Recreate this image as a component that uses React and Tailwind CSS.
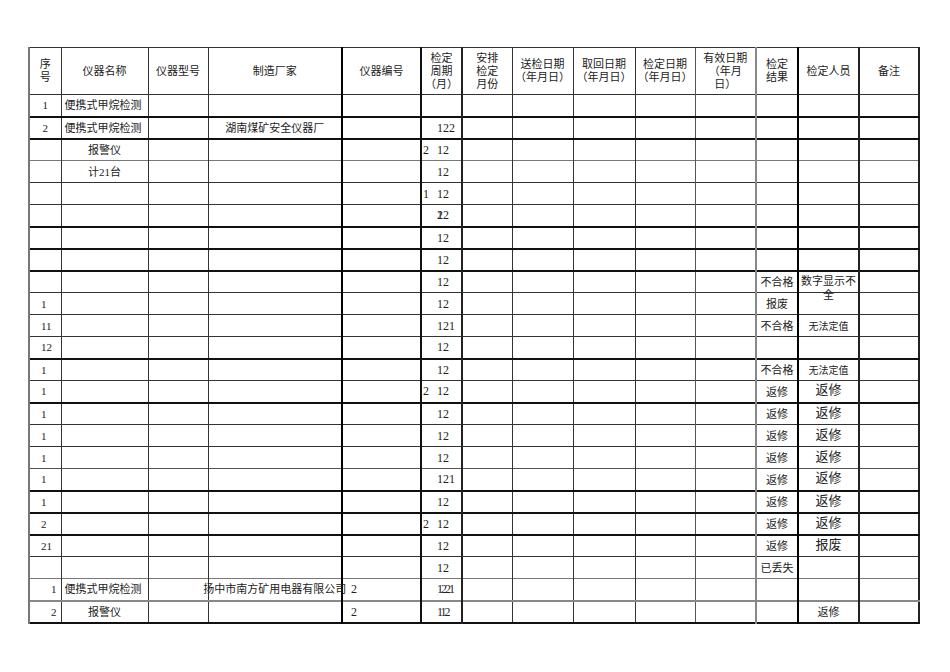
const cols = [32, 87, 60, 134, 79, 41, 50, 61, 62, 60, 61, 42, 61, 60]

const vLines = [
  'border-l-2 border-l-[#777]',
  'border-l border-l-[#333]',
  'border-l border-l-[#333]',
  'border-l border-l-[#333]',
  'border-l-2 border-l-[#000]',
  'border-l-2 border-l-[#111]',
  'border-l-2 border-l-[#222]',
  'border-l border-l-[#333]',
  'border-l border-l-[#333]',
  'border-l border-l-[#333]',
  'border-l border-l-[#555]',
  'border-l-2 border-l-[#888]',
  'border-l-2 border-l-[#000]',
  'border-l-2 border-l-[#222]',
]

// top border of each body row
const hLines = [
  'border-t border-t-[#333]',
  'border-t-2 border-t-[#111]',
  'border-t-2 border-t-[#111]',
  'border-t border-t-[#777]',
  'border-t border-t-[#333]',
  'border-t border-t-[#333]',
  'border-t-2 border-t-[#111]',
  'border-t-2 border-t-[#111]',
  'border-t-2 border-t-[#111]',
  'border-t border-t-[#333]',
  'border-t border-t-[#333]',
  'border-t border-t-[#333]',
  'border-t-2 border-t-[#111]',
  'border-t border-t-[#333]',
  'border-t-2 border-t-[#111]',
  'border-t border-t-[#333]',
  'border-t border-t-[#333]',
  'border-t border-t-[#555]',
  'border-t-2 border-t-[#111]',
  'border-t-2 border-t-[#111]',
  'border-t-2 border-t-[#111]',
  'border-t border-t-[#333]',
  'border-t border-t-[#777]',
  'border-t-2 border-t-[#888]',
]

const headers = [
  ['序', '号'],
  ['仪器名称'],
  ['仪器型号'],
  ['制造厂家'],
  ['仪器编号'],
  ['检定', '周期', '（月）'],
  ['安排', '检定', '月份'],
  ['送检日期', '（年月日）'],
  ['取回日期', '（年月日）'],
  ['检定日期', '（年月日）'],
  ['有效日期', '（年月', '日）'],
  ['检定', '结果'],
  ['检定人员'],
  ['备注'],
]

const fix = { result: '返修', person: '返修' }

const rows = [
  { no: '1', name: '便携式甲烷检测', nameLeft: true },
  { no: '2', name: '便携式甲烷检测', nameLeft: true, maker: '湖南煤矿安全仪器厂', cycle: '122' },
  { name: '报警仪', cycle: '12', pre: '2' },
  { name: '计21台', cycle: '12' },
  { cycle: '12', pre: '1' },
  { cycle: '12', ghost: '2' },
  { cycle: '12' },
  { cycle: '12' },
  { cycle: '12', result: '不合格', person: '数字显示不全', wrap: true },
  { no: '1', noLeft: true, cycle: '12', result: '报废' },
  { no: '11', noLeft: true, cycle: '121', result: '不合格', person: '无法定值', small: true },
  { no: '12', noLeft: true, cycle: '12' },
  { no: '1', noLeft: true, cycle: '12', result: '不合格', person: '无法定值', small: true },
  { no: '1', noLeft: true, cycle: '12', pre: '2', ...fix },
  { no: '1', noLeft: true, cycle: '12', ...fix },
  { no: '1', noLeft: true, cycle: '12', ...fix },
  { no: '1', noLeft: true, cycle: '12', ...fix },
  { no: '1', noLeft: true, cycle: '121', ...fix },
  { no: '1', noLeft: true, cycle: '12', ...fix },
  { no: '2', noLeft: true, cycle: '12', pre: '2', ...fix },
  { no: '21', noLeft: true, cycle: '12', result: '返修', person: '报废' },
  { cycle: '12', result: '已丢失' },
  { no: '1', noRight: true, name: '便携式甲烷检测', nameLeft: true, maker: '扬中市南方矿用电器有限公司', code: '2', cycle: '1221', tight: true },
  { no: '2', noRight: true, name: '报警仪', code: '2', cycle: '112', tight: true, person: '返修', personSmall: true },
]

function Cycle({ r }) {
  if (!r.cycle) return null
  return (
    <div className="relative flex items-center pl-[15px]">
      {r.pre && <span className="absolute left-[1px]">{r.pre}</span>}
      {r.ghost && <span className="absolute left-[15px]">{r.ghost}</span>}
      <span className={r.tight ? 'tracking-[-2px]' : ''}>{r.cycle}</span>
    </div>
  )
}

function Person({ r }) {
  if (!r.person) return null
  if (r.wrap) {
    return (
      <div className="absolute left-0 right-0 top-[2px] z-10 text-center leading-[14px] whitespace-normal break-all">
        {r.person}
      </div>
    )
  }
  if (r.small) return <div className="text-center text-[10px] pt-[3px]">{r.person}</div>
  if (r.personSmall) return <div className="text-center">{r.person}</div>
  return <div className="text-center text-[13px] pb-[2px]">{r.person}</div>
}

export default function App() {
  return (
    <div className="w-[950px] h-[672px] bg-white pt-[47px] pl-[28px] text-[11px] leading-[14px] text-[#222] font-['Liberation_Serif','Noto_Sans_CJK_SC',serif]">
      <table className="table-fixed border-collapse w-[892px] border-r-2 border-r-[#222] border-b-2 border-b-[#111]">
        <colgroup>
          {cols.map((w, i) => (
            <col key={i} style={{ width: w }} />
          ))}
        </colgroup>
        <thead>
          <tr className="h-[47px]">
            {headers.map((lines, i) => (
              <th
                key={i}
                className={`${vLines[i]} border-t border-t-[#333] p-0 font-normal text-center align-middle leading-[13px]`}
              >
                {lines.map((l, j) => (
                  <div key={j}>{l}</div>
                ))}
              </th>
            ))}
          </tr>
        </thead>
        <tbody>
          {rows.map((r, ri) => {
            const b = hLines[ri]
            return (
              <tr key={ri} className="h-[22px]">
                <td className={`${vLines[0]} ${b} p-0 whitespace-nowrap`}>
                  <div
                    className={
                      r.noRight
                        ? 'text-right pr-[4px]'
                        : r.noLeft
                          ? 'text-left pl-[11px]'
                          : 'text-center'
                    }
                  >
                    {r.no}
                  </div>
                </td>
                <td className={`${vLines[1]} ${b} p-0 whitespace-nowrap`}>
                  <div className={r.nameLeft ? 'pl-[3px]' : 'text-center'}>{r.name}</div>
                </td>
                <td className={`${vLines[2]} ${b} p-0`} />
                <td className={`${vLines[3]} ${b} p-0 whitespace-nowrap`}>
                  <div className="flex justify-center">
                    <span>{r.maker}</span>
                  </div>
                </td>
                <td className={`${vLines[4]} ${b} p-0 whitespace-nowrap`}>
                  <div className="pl-[8px] text-[12px]">{r.code}</div>
                </td>
                <td className={`${vLines[5]} ${b} p-0 whitespace-nowrap text-[12px]`}>
                  <Cycle r={r} />
                </td>
                <td className={`${vLines[6]} ${b} p-0`} />
                <td className={`${vLines[7]} ${b} p-0`} />
                <td className={`${vLines[8]} ${b} p-0`} />
                <td className={`${vLines[9]} ${b} p-0`} />
                <td className={`${vLines[10]} ${b} p-0`} />
                <td className={`${vLines[11]} ${b} p-0 whitespace-nowrap`}>
                  <div className="text-center pt-[1px]">{r.result}</div>
                </td>
                <td className={`${vLines[12]} ${b} p-0 relative whitespace-nowrap`}>
                  <Person r={r} />
                </td>
                <td className={`${vLines[13]} ${b} p-0`} />
              </tr>
            )
          })}
        </tbody>
      </table>
    </div>
  )
}
